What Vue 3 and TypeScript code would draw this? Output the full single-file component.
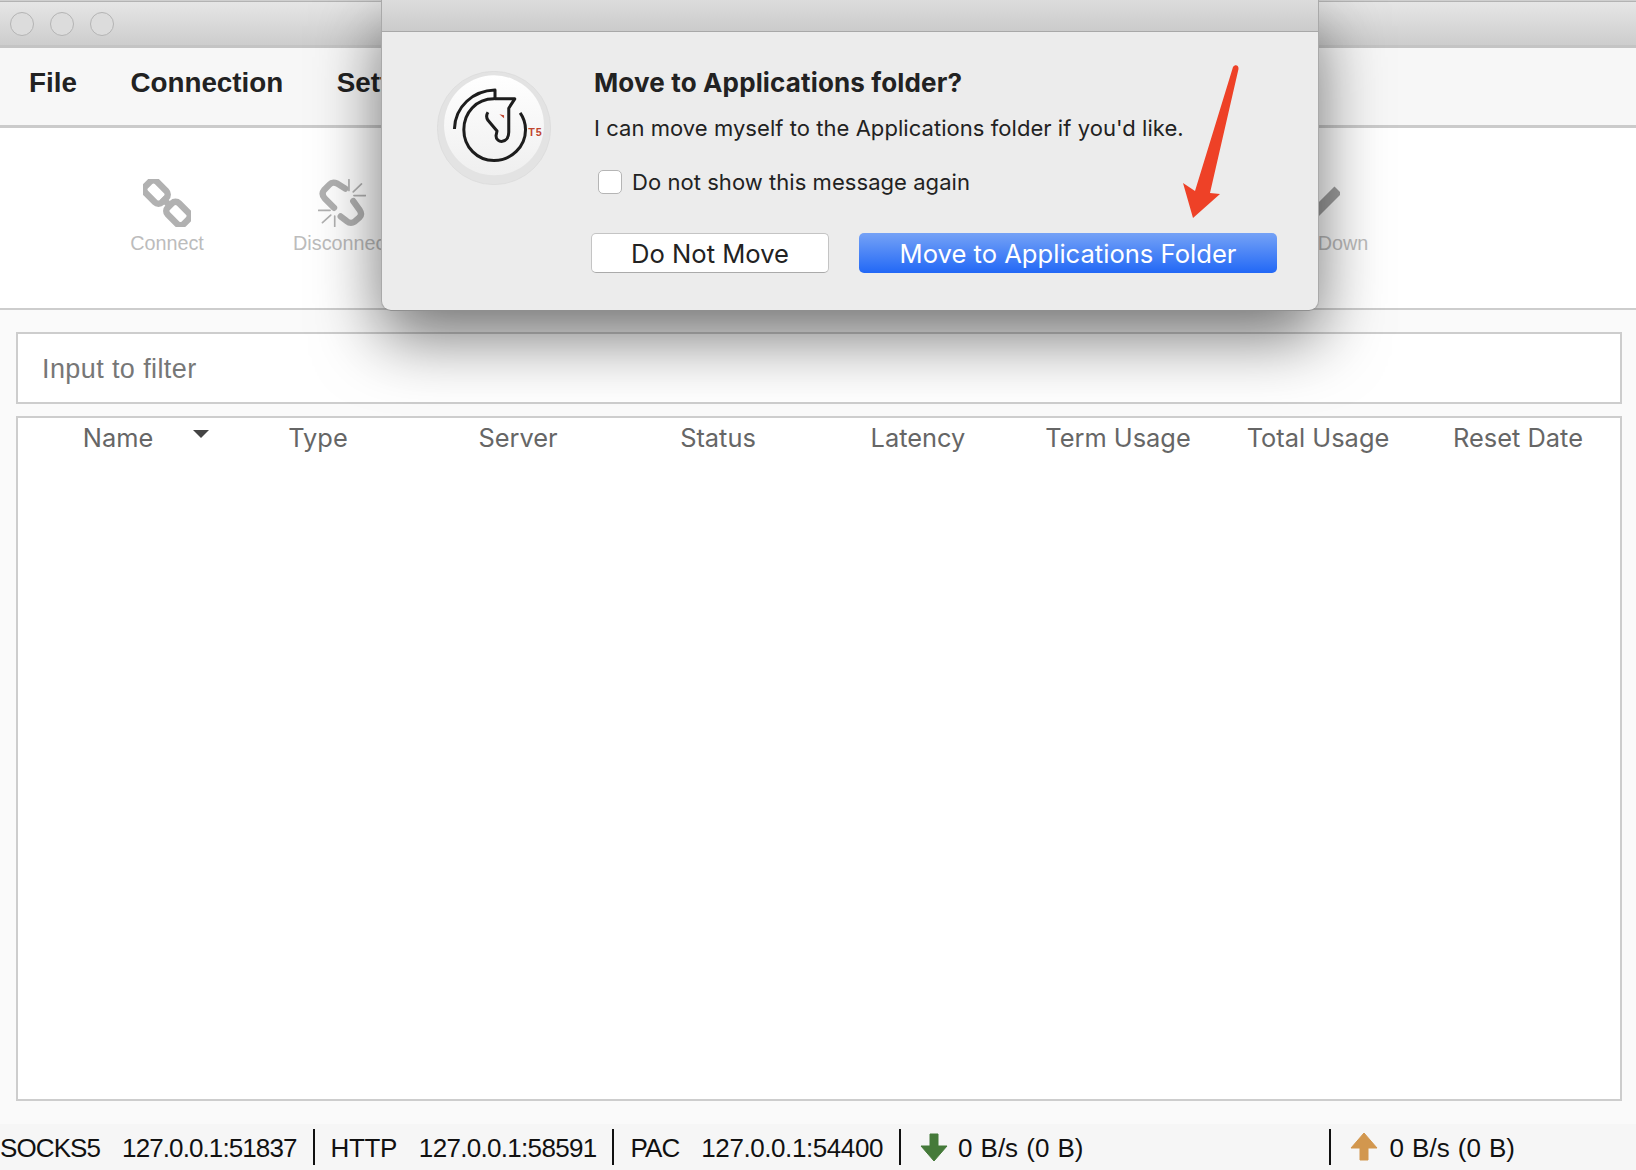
<script setup lang="ts">
const menus: string[] = ['File', 'Connection', 'Settings', 'Help']
const columns: string[] = ['Name', 'Type', 'Server', 'Status', 'Latency', 'Term Usage', 'Total Usage', 'Reset Date']
</script>

<template>
  <div class="window">
    <header class="titlebar">
      <span class="light"></span>
      <span class="light"></span>
      <span class="light"></span>
    </header>

    <nav class="menubar">
      <span v-for="m in menus" :key="m" class="menu">{{ m }}</span>
    </nav>

    <section class="toolbar">
      <div class="tool tool-connect">
        <svg class="tool-icon" viewBox="142 178 48 48" width="48" height="48">
          <g fill="none" stroke="#b1b1b1" stroke-width="6.5">
            <rect x="-11.5" y="-8" width="23" height="16" rx="5" transform="translate(155 191) rotate(45)" />
            <rect x="-11.5" y="-8" width="23" height="16" rx="5" transform="translate(177 212.5) rotate(45)" />
            <path d="M161 197 L171 206.5" />
          </g>
        </svg>
        <span class="tool-label">Connect</span>
      </div>
      <div class="tool tool-disconnect">
        <svg class="tool-icon" viewBox="955 533 142 145" width="48" height="48">
          <g fill="none" stroke="#b1b1b1" stroke-linecap="round" stroke-linejoin="round">
            <path stroke-width="19" d="M1036 562 L1012 547 Q997 540 988 550 L972 566 Q962 578 974 592 L1002 620" />
            <path stroke-width="19" d="M1060 600 L1080 628 Q1088 640 1078 650 L1064 662 Q1052 670 1040 660 L1022 646" />
            <path stroke-width="5" d="M1047 535 V568 M1085 548 L1060 572 M1097 583 H1062 M955 628 H990 M967 665 L992 642 M1004 677 V645" />
          </g>
        </svg>
        <span class="tool-label">Disconnect</span>
      </div>
      <div class="tool tool-down">
        <svg class="tool-icon" viewBox="0 0 48 48" width="48" height="48">
          <path d="M18 39 L46 11" stroke="#a0a0a0" stroke-width="10" fill="none" />
        </svg>
        <span class="tool-label">Move Down</span>
      </div>
    </section>

    <main class="content">
      <div class="filter">Input to filter</div>
      <div class="table">
        <div class="thead">
          <div v-for="(c, i) in columns" :key="c" class="th">
            {{ c }}
            <span v-if="i === 0" class="sort"></span>
          </div>
        </div>
      </div>
    </main>

    <footer class="status">
      <span class="s-name">SOCKS5</span><span class="s-addr a1">127.0.0.1:51837</span><i class="sep sep1"></i>
      <span class="s-name s-http">HTTP</span><span class="s-addr a2">127.0.0.1:58591</span><i class="sep sep1"></i>
      <span class="s-name">PAC</span><span class="s-addr a3">127.0.0.1:54400</span><i class="sep sep1"></i>
      <svg class="arrow" viewBox="0 0 28 28" width="28" height="28">
        <path d="M10 1 H18 V13 H27 L14 28 L1 13 H10 Z" fill="#457a3a" stroke="#457a3a" stroke-linejoin="round" />
      </svg>
      <span class="rate rate-down">0 B/s (0 B)</span>
      <i class="sep"></i>
      <svg class="arrow arrow-up" viewBox="0 0 28 28" width="28" height="28">
        <path d="M10 27 H18 V15 H27 L14 0 L1 15 H10 Z" fill="#d2974e" stroke="#d2974e" stroke-linejoin="round" />
      </svg>
      <span class="rate">0 B/s (0 B)</span>
    </footer>

    <div class="sheet">
      <div class="sheet-top"></div>
      <div class="sheet-body">
        <svg class="logo" viewBox="172 215 340 340" width="114" height="114">
          <defs>
            <linearGradient id="face" x1="0" y1="0" x2="0" y2="1">
              <stop offset="0" stop-color="#ffffff" />
              <stop offset="1" stop-color="#efefef" />
            </linearGradient>
          </defs>
          <circle cx="342" cy="385" r="169" fill="#e3e3e3" stroke="#dadada" stroke-width="2" />
          <circle cx="342" cy="377" r="149" fill="url(#face)" />
          <g fill="none" stroke="#1d1d1d" stroke-width="9">
            <path d="M224 388 C226 320 280 274 345 272 V298 H404 L386 326 V398 C386 432 348 432 348 408 L351 394 L324 362 Q316 350 324 338" stroke-linejoin="round" />
            <path d="M342 298 C288 298 252 340 252 390 C252 442 292 482 342 482 C394 482 436 440 436 390 C436 372 430 354 420 340" />
          </g>
          <path d="M358 344 L372 347 L372 356 Z" fill="#c0452f" />
          <text x="444" y="408" class="logo-t5">T5</text>
        </svg>
        <div class="sheet-text">
          <div class="sheet-title">Move to Applications folder?</div>
          <div class="sheet-msg">I can move myself to the Applications folder if you'd like.</div>
          <label class="check">
            <span class="box"></span>
            <span>Do not show this message again</span>
          </label>
          <div class="buttons">
            <button class="btn btn-plain">Do Not Move</button>
            <button class="btn btn-primary">Move to Applications Folder</button>
          </div>
        </div>
      </div>
    </div>

    <svg class="red-arrow" viewBox="0 0 65 165" width="65" height="165">
      <path d="M53 7 C55 4 59 5 58.5 9 L30 133 L40 134 L13 158 L3 123 L15 131 Z" fill="#ee4127" />
    </svg>
  </div>
</template>

<style>
html, body { margin: 0; background: #fff; }
</style>

<style scoped>
.window {
  position: relative;
  width: 1636px;
  height: 1170px;
  overflow: hidden;
  display: flex;
  flex-direction: column;
  background: #fafafa;
  font-family: "Liberation Sans", Arial, sans-serif;
}
.titlebar {
  box-sizing: border-box;
  height: 48px;
  flex: none;
  display: flex;
  align-items: center;
  gap: 16px;
  padding: 3px 0 0 10px;
  border-bottom: 3px solid #c4c4c4;
  background: linear-gradient(#cfcfcf 0, #cfcfcf 1px, #b3b3b3 1px, #b3b3b3 2px, #e6e6e6 2px, #cdcdcd 100%);
}
.light {
  box-sizing: border-box;
  width: 24px;
  height: 24px;
  border-radius: 50%;
  border: 1px solid #b4b4b4;
  background: #dcdcdc;
}
.menubar {
  box-sizing: border-box;
  flex: none;
  height: 80px;
  display: flex;
  align-items: center;
  gap: 53.5px;
  padding: 0 0 8px 29px;
  background: #f7f7f7;
  border-bottom: 3px solid #cbcbcb;
}
.menu {
  font-weight: 700;
  font-size: 27.8px;
  color: #222;
}
.toolbar {
  box-sizing: border-box;
  flex: none;
  height: 182px;
  display: flex;
  background: #fff;
  border-bottom: 2px solid #cdcdcd;
  padding-top: 51px;
}
.tool {
  display: flex;
  flex-direction: column;
  align-items: center;
  width: 140px;
}
.tool-icon { display: block; }
.tool-label {
  margin-top: 3px;
  font-size: 19.8px;
  line-height: 26px;
  color: #bcbcbc;
  white-space: nowrap;
}
.tool-connect { margin-left: 97px; }
.tool-disconnect { margin-left: 35px; }
.tool-down { margin-left: 834px; }
.content {
  flex: 1;
  display: flex;
  flex-direction: column;
  padding: 22px 14px 23px 16px;
  gap: 12px;
  min-height: 0;
}
.filter {
  box-sizing: border-box;
  height: 72px;
  flex: none;
  padding: 2px 0 0 24px;
  display: flex;
  align-items: center;
  background: #fff;
  border: 2px solid #cdcdcd;
  font-size: 27px;
  letter-spacing: 0.4px;
  color: #777;
}
.table {
  flex: 1;
  box-sizing: border-box;
  background: #fff;
  border: 2px solid #cdcdcd;
}
.thead {
  display: grid;
  grid-template-columns: repeat(8, 200px);
  height: 38px;
}
.th {
  position: relative;
  display: flex;
  align-items: center;
  justify-content: center;
  font-family: Inter, "Liberation Sans", sans-serif;
  font-size: 25.4px;
  color: #666;
}
.sort {
  position: absolute;
  left: 175px;
  top: 12px;
  width: 0;
  height: 0;
  border-left: 8px solid transparent;
  border-right: 8px solid transparent;
  border-top: 8px solid #444;
}
.status {
  box-sizing: border-box;
  flex: none;
  height: 46px;
  display: flex;
  align-items: center;
  background: #f6f6f6;
  font-size: 26px;
  letter-spacing: -0.9px;
  color: #111;
  white-space: nowrap;
}
.s-name, .s-addr, .rate { padding-top: 3px; }
.s-name { margin-right: 22px; }
.s-http { letter-spacing: -0.4px; }
.a1 { letter-spacing: -0.9px; }
.a2 { letter-spacing: -0.69px; }
.a3 { letter-spacing: -0.42px; }
.sep {
  width: 2px;
  height: 36px;
  background: #111;
  flex: none;
}
.sep1 { margin: 0 16px; }
.arrow { flex: none; margin: 0 10px 0 3px; }
.arrow-up { margin-right: 11px; }
.rate { letter-spacing: 0; word-spacing: 0.9px; }
.rate-down { margin-right: 246px; }
.rate-down + .sep { margin-right: 16px; }
.sheet {
  position: absolute;
  left: 381px;
  top: 0;
  width: 938px;
  height: 311px;
  box-sizing: border-box;
  background: #ececec;
  border: 1px solid #a9a9a9;
  border-top: 0;
  border-bottom-color: #8f8f8f;
  border-radius: 0 0 10px 10px;
  box-shadow: 0 26px 66px rgba(0, 0, 0, 0.55);
  font-family: Inter, "Liberation Sans", sans-serif;
  color: #222;
}
.sheet-top {
  height: 32px;
  box-sizing: border-box;
  background: linear-gradient(#dcdcdc, #cbcbcb);
  border-bottom: 1px solid #a8a8a8;
}
.sheet-body {
  display: flex;
  padding: 39px 0 0 55px;
}
.logo { flex: none; }
.sheet-text {
  margin-left: 43px;
  margin-top: -2px;
  display: flex;
  flex-direction: column;
}
.logo-t5 {
  font-family: "Liberation Sans", sans-serif;
  font-weight: 700;
  font-size: 32px;
  letter-spacing: 3px;
  fill: #c0452f;
}
.sheet-title {
  font-weight: 700;
  font-size: 26px;
  letter-spacing: 0.15px;
  line-height: 28px;
  color: #222;
}
.sheet-msg {
  margin-top: 17px;
  font-size: 22px;
  letter-spacing: 0.05px;
  line-height: 28px;
}
.check {
  margin-top: 26px;
  margin-left: 4px;
  display: flex;
  align-items: center;
  gap: 10px;
  font-size: 22px;
  letter-spacing: 0.05px;
  line-height: 28px;
}
.box {
  box-sizing: border-box;
  width: 24px;
  height: 24px;
  border-radius: 5px;
  background: #fff;
  border: 1px solid #b5b5b5;
}
.buttons {
  margin-top: 37px;
  margin-left: -3px;
  display: flex;
  gap: 30px;
}
.btn {
  box-sizing: border-box;
  height: 40px;
  padding: 0;
  font-family: Inter, "Liberation Sans", sans-serif;
  font-size: 25.6px;
  border-radius: 5px;
}
.btn-plain {
  width: 238px;
  background: #fff;
  color: #222;
  border: 1px solid #c4c4c4;
  border-bottom-color: #aaa;
}
.btn-primary {
  width: 418px;
  color: #fff;
  border: 0;
  background: linear-gradient(#75a2f6, #2268f6);
}
.red-arrow {
  position: absolute;
  left: 1180px;
  top: 60px;
}
</style>
